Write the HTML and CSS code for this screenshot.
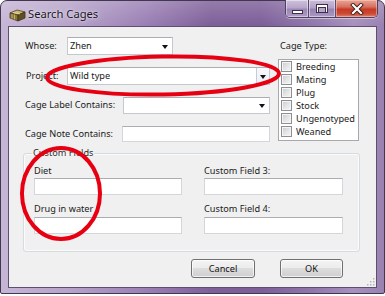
FILE: index.html
```html
<!DOCTYPE html>
<html>
<head>
<meta charset="utf-8">
<title>Search Cages</title>
<link rel="stylesheet" href="styles.css">
</head>
<body>
<div class="window">
  <div class="titlebar">
    <svg class="app-icon" width="17" height="14" viewBox="0 0 17 14">
      <polygon points="1,5 8,2 16,4 9,7" fill="#cdb878" stroke="#4a3f1c" stroke-width="0.8"/>
      <polygon points="1,5 9,7 9,13 1,10" fill="#8a7636" stroke="#4a3f1c" stroke-width="0.8"/>
      <polygon points="9,7 16,4 16,10 9,13" fill="#5f5024" stroke="#3a3115" stroke-width="0.8"/>
      <line x1="3" y1="6" x2="3" y2="10.5" stroke="#d8c88a" stroke-width="0.7"/>
      <line x1="5.5" y1="6.5" x2="5.5" y2="11.5" stroke="#d8c88a" stroke-width="0.7"/>
      <line x1="4" y1="4.5" x2="11" y2="6" stroke="#f1e3a8" stroke-width="0.7"/>
    </svg>
    <span class="title">Search Cages</span>
    <div class="caption-buttons">
      <div class="cbtn cbtn-min">
        <span class="min-glyph"></span>
      </div>
      <div class="cbtn cbtn-max">
        <span class="max-glyph"></span>
      </div>
      <div class="cbtn cbtn-close">
        <svg width="14" height="12" viewBox="0 0 14 12">
          <path d="M3 2 L11 10 M11 2 L3 10" stroke="#3b1d1a" stroke-width="4" stroke-linecap="square"/>
          <path d="M3 2 L11 10 M11 2 L3 10" stroke="#ffffff" stroke-width="2.2" stroke-linecap="square"/>
        </svg>
      </div>
    </div>
  </div>

  <div class="client">
    <div class="top-section">
      <div class="form-col">
        <div class="row">
          <label class="lbl lbl-short">Whose:</label>
          <div class="combo combo-whose"><span class="combo-text">Zhen</span><span class="arrow"></span></div>
        </div>
        <div class="row row-gap-12">
          <label class="lbl lbl-short lbl-indent">Project:</label>
          <div class="combo combo-project"><span class="combo-text">Wild type</span><span class="drop-btn"><span class="arrow"></span></span></div>
        </div>
        <div class="row row-gap-11">
          <label class="lbl lbl-long">Cage Label Contains:</label>
          <div class="combo combo-label"><span class="combo-text"></span><span class="arrow"></span></div>
        </div>
        <div class="row row-gap-11 row-text">
          <label class="lbl lbl-long lbl-note">Cage Note Contains:</label>
          <div class="textbox textbox-note"></div>
        </div>
      </div>
      <div class="type-col">
        <div class="type-label">Cage Type:</div>
        <ul class="check-list">
          <li><span class="chk"></span>Breeding</li>
          <li><span class="chk"></span>Mating</li>
          <li><span class="chk"></span>Plug</li>
          <li><span class="chk"></span>Stock</li>
          <li><span class="chk"></span>Ungenotyped</li>
          <li><span class="chk"></span>Weaned</li>
        </ul>
      </div>
    </div>

    <fieldset class="group">
      <legend class="group-title">Custom Fields</legend>
      <div class="group-grid">
        <div class="field">
          <div class="field-label">Diet</div>
          <div class="textbox textbox-cf1"></div>
        </div>
        <div class="field">
          <div class="field-label">Custom Field 3:</div>
          <div class="textbox textbox-cf3"></div>
        </div>
        <div class="field field-second">
          <div class="field-label">Drug in water</div>
          <div class="textbox textbox-cf1"></div>
        </div>
        <div class="field field-second">
          <div class="field-label">Custom Field 4:</div>
          <div class="textbox textbox-cf3"></div>
        </div>
      </div>
    </fieldset>

    <div class="button-row">
      <button class="btn btn-cancel">Cancel</button>
      <button class="btn btn-ok">OK</button>
    </div>

    <svg class="size-grip" width="8" height="8" viewBox="0 0 8 8">
      <rect x="6" y="0" width="1.5" height="1.5" fill="#b5b5b5"/>
      <rect x="3" y="3" width="1.5" height="1.5" fill="#b5b5b5"/>
      <rect x="6" y="3" width="1.5" height="1.5" fill="#b5b5b5"/>
      <rect x="0" y="6" width="1.5" height="1.5" fill="#b5b5b5"/>
      <rect x="3" y="6" width="1.5" height="1.5" fill="#b5b5b5"/>
      <rect x="6" y="6" width="1.5" height="1.5" fill="#b5b5b5"/>
    </svg>
  </div>
</div>

<svg class="annotations" width="385" height="296" viewBox="0 0 385 296">
  <ellipse cx="163" cy="75.5" rx="116" ry="19" fill="none" stroke="#e60012" stroke-width="4" transform="rotate(-1 163 75.5)"/>
  <ellipse cx="61" cy="193.5" rx="39" ry="45.5" fill="none" stroke="#e60012" stroke-width="4"/>
</svg>
</body>
</html>
```

FILE: styles.css
```css
* { box-sizing: border-box; }

html, body {
  margin: 0;
  padding: 0;
}

body {
  width: 385px;
  height: 296px;
  background: #ffffff;
  font-family: "Noto Sans", "Open Sans", sans-serif;
  font-size: 9.2px;
  color: #1b1b1b;
  position: relative;
  overflow: hidden;
}

.window {
  width: 385px;
  height: 294px;
  border: 1px solid #43364f;
  border-radius: 7px 7px 2px 2px;
  background:
    linear-gradient(180deg, rgba(255,255,255,0.18) 0px, rgba(255,255,255,0) 24px),
    linear-gradient(90deg, #c6b6d6 0%, #b6a3c9 18%, #9a7fb4 38%, #7e5f99 55%, #7d5e99 68%, #9179ac 82%, #a791bd 92%, #9982b1 100%);
  display: flex;
  flex-direction: column;
  padding: 0 7px 5px 7px;
}

/* ---------- title bar ---------- */
.titlebar {
  height: 25px;
  display: flex;
  align-items: flex-start;
  flex: none;
}

.app-icon {
  margin: 7px 0 0 1px;
  flex: none;
}

.title {
  margin: 5px 0 0 2px;
  font-size: 11.2px;
  color: #1c1424;
  text-shadow: 0 0 5px rgba(255,255,255,0.75), 0 0 2px rgba(255,255,255,0.6);
  line-height: 15px;
}

.caption-buttons {
  margin-left: auto;
  display: flex;
  height: 18px;
  margin-top: -1px;
  margin-right: -1px;
  border: 1px solid #4f3f62;
  border-top: none;
  border-radius: 0 0 5px 5px;
  overflow: hidden;
  box-shadow: 0 1px 0 rgba(255,255,255,0.45);
}

.cbtn {
  height: 17px;
  display: flex;
  align-items: center;
  justify-content: center;
  border-right: 1px solid #5a4a6c;
  box-shadow: inset 0 0 0 1px rgba(255,255,255,0.45);
}

.cbtn-min {
  width: 23px;
  background: linear-gradient(180deg, #cfc2dd 0%, #b7a6ca 45%, #9c86b4 55%, #ae9bc4 100%);
}

.cbtn-max {
  width: 27px;
  background: linear-gradient(180deg, #cbbdda 0%, #b3a1c7 45%, #9882b1 55%, #ab98c2 100%);
}

.cbtn-close {
  width: 41px;
  border-right: none;
  background: linear-gradient(180deg, #e8a597 0%, #d9705f 40%, #c43a26 55%, #cc4a32 80%, #e0806a 100%);
  box-shadow: inset 0 0 0 1px rgba(255,220,210,0.45);
}

.min-glyph {
  width: 11px;
  height: 4px;
  margin-top: 6px;
  background: #ffffff;
  border: 1px solid #3c2f4a;
}

.max-glyph {
  width: 12px;
  height: 9px;
  border: 1px solid #3c2f4a;
  background: #ffffff;
  box-shadow: inset 0 0 0 1px #ffffff;
  position: relative;
}

.max-glyph::after {
  content: "";
  display: block;
  margin: 2px 1px 0 1px;
  height: 4px;
  border: 1px solid #3c2f4a;
  background: #b7a6ca;
}

/* ---------- client ---------- */
.client {
  flex: 1;
  position: relative;
  background: #f0f0f0;
  border: 1px solid #5e4f70;
  padding: 10px 0 0 14px;
  display: flex;
  flex-direction: column;
}

.top-section {
  display: flex;
  align-items: flex-start;
}

.form-col {
  width: 247px;
  padding-left: 2px;
  display: flex;
  flex-direction: column;
}

.row {
  display: flex;
  align-items: center;
  height: 18px;
}

.row-gap-12 { margin-top: 12px; }
.row-gap-11 { margin-top: 11px; }
.row-text { height: 17px; }

.lbl {
  flex: none;
  white-space: nowrap;
  line-height: 12px;
}

.lbl-short { width: 42px; }
.lbl-indent { padding-left: 1px; }
.lbl-long { width: 98px; }
.lbl-note { width: 97px; }

.combo {
  height: 18px;
  background: #ffffff;
  border: 1px solid #c5c8ce;
  border-top-color: #abadb3;
  display: flex;
  align-items: center;
  padding-left: 2px;
  position: relative;
}

.combo-text {
  flex: 1;
  line-height: 12px;
}

.combo .arrow {
  margin-right: 4px;
}

.arrow {
  width: 0;
  height: 0;
  border-left: 3.5px solid transparent;
  border-right: 3.5px solid transparent;
  border-top: 4px solid #111111;
  margin-top: 1px;
}

.combo-whose { width: 106px; }
.combo-project { width: 203px; padding-right: 0; }
.combo-label { width: 147px; height: 17px; }

.drop-btn {
  width: 13px;
  height: 16px;
  border-left: 1px solid #c5ccd6;
  display: flex;
  align-items: center;
  justify-content: center;
  background: linear-gradient(180deg, #f7f9fc 0%, #eaeef4 100%);
}

.drop-btn .arrow { margin-right: 0; }

.textbox {
  height: 17px;
  background: #ffffff;
  border: 1px solid #d3d6db;
  border-top-color: #abadb3;
}

.textbox-note { width: 148px; height: 16px; }

/* ---------- cage type ---------- */
.type-col {
  margin-left: 8px;
  display: flex;
  flex-direction: column;
}

.type-label {
  line-height: 12px;
  margin-top: 3px;
  padding-left: 2px;
}

.check-list {
  list-style: none;
  margin: 7px 0 0 0;
  padding: 0 0 0 2px;
  width: 81px;
  height: 82px;
  background: #ffffff;
  border: 1px solid #a6a8ad;
}

.check-list li {
  height: 13px;
  display: flex;
  align-items: center;
  line-height: 12px;
}

.chk {
  width: 11px;
  height: 11px;
  margin-right: 4px;
  border: 1px solid #8e8f93;
  background: linear-gradient(135deg, #c9cacd 0%, #e2e3e5 50%, #f7f7f8 100%);
  box-shadow: inset 0 0 0 1px #f4f4f4;
  flex: none;
}

/* ---------- group ---------- */
.group {
  margin: 5px 0 0 0;
  width: 337px;
  border: 1px solid #d4dbe1;
  border-radius: 3px;
  padding: 6px 10px 17px 10px;
  min-width: 0;
  box-shadow: inset 0 0 0 1px #fbfbfb;
}

.group-title {
  padding: 0 1px;
  margin-left: -2px;
  line-height: 12px;
  color: #2d2d2d;
}

.group-grid {
  display: grid;
  grid-template-columns: 148px 139px;
  column-gap: 22px;
}

.field {
  display: flex;
  flex-direction: column;
}

.field-second { margin-top: 8px; }

.field-label {
  line-height: 12px;
  margin-bottom: 1px;
}

.field-second .field-label { margin-bottom: 2px; }

.textbox-cf1 { width: 148px; }
.textbox-cf3 { width: 139px; }

/* ---------- buttons ---------- */
.button-row {
  display: flex;
  justify-content: flex-end;
  gap: 25px;
  margin-top: 7px;
  padding-right: 33px;
}

.btn {
  height: 19px;
  font-family: inherit;
  font-size: 9.2px;
  color: #111111;
  border: 1px solid #707070;
  border-radius: 3px;
  background: linear-gradient(180deg, #f4f4f4 0%, #ececec 45%, #dddddd 50%, #cfcfcf 100%);
  box-shadow: inset 0 0 0 1px rgba(255,255,255,0.7);
  padding: 0;
  line-height: 12px;
}

.btn-cancel { width: 64px; }
.btn-ok { width: 63px; }

.size-grip {
  position: absolute;
  right: 1px;
  bottom: 1px;
}

/* ---------- annotations ---------- */
.annotations {
  position: absolute;
  left: 0;
  top: 0;
  pointer-events: none;
}
```
